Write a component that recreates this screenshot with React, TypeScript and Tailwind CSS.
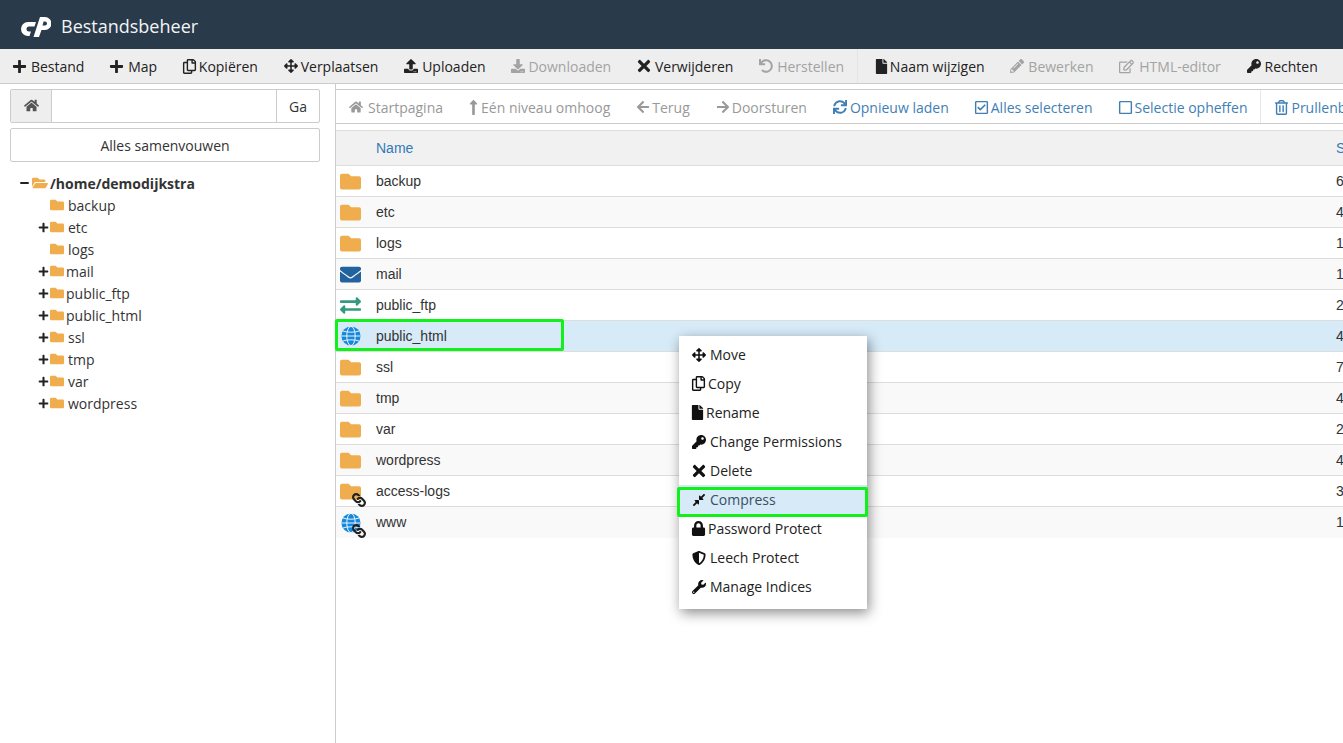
import React from "react";
import {
  FaPlus, FaMinus, FaRegCopy, FaArrowsAlt, FaUpload, FaDownload, FaTimes, FaUndo, FaFile, FaPencilAlt, FaRegEdit, FaKey,
  FaHome, FaLongArrowAltUp, FaArrowLeft, FaArrowRight, FaSync, FaRegCheckSquare, FaRegSquare, FaRegTrashAlt,
  FaFolder, FaFolderOpen, FaEnvelope, FaExchangeAlt, FaLink, FaCompressAlt, FaLock, FaShieldAlt, FaWrench,
} from "react-icons/fa";

const sans = "font-['Open_Sans',sans-serif]";

type IconT = React.ComponentType<{ className?: string }>;
type Tool = { Icon: IconT; label: string; iconBox: string; size: string; disabled?: boolean };

const tools: Tool[] = [
  { Icon: FaPlus, label: "Bestand", iconBox: "w-[18px]", size: "text-[15px] -ml-[1px]" },
  { Icon: FaPlus, label: "Map", iconBox: "w-[18px]", size: "text-[15px] -ml-[1px]" },
  { Icon: FaRegCopy, label: "Kopiëren", iconBox: "w-[16px]", size: "text-[15px] -ml-[1px]" },
  { Icon: FaArrowsAlt, label: "Verplaatsen", iconBox: "w-[17px]", size: "text-[14px]" },
  { Icon: FaUpload, label: "Uploaden", iconBox: "w-[18px]", size: "text-[14px]" },
  { Icon: FaDownload, label: "Downloaden", iconBox: "w-[17px]", size: "text-[14px]", disabled: true },
  { Icon: FaTimes, label: "Verwijderen", iconBox: "w-[18px]", size: "text-[18px] -ml-[2px]" },
  { Icon: FaUndo, label: "Herstellen", iconBox: "w-[18px]", size: "text-[14px]", disabled: true },
];
const tools2: Tool[] = [
  { Icon: FaFile, label: "Naam wijzigen", iconBox: "w-[14px]", size: "text-[15px] -ml-[2px]" },
  { Icon: FaPencilAlt, label: "Bewerken", iconBox: "w-[18px]", size: "text-[14px]", disabled: true },
  { Icon: FaRegEdit, label: "HTML-editor", iconBox: "w-[20px]", size: "text-[15px]", disabled: true },
  { Icon: FaKey, label: "Rechten", iconBox: "w-[18px]", size: "text-[14px]" },
];

function ToolItem({ t }: { t: Tool }) {
  return (
    <div className={`flex items-center px-[12.875px] whitespace-nowrap ${t.disabled ? "text-[#a3a3a3]" : "text-[#222222]"}`}>
      <span className={`flex items-center shrink-0 ${t.iconBox}`}>
        <t.Icon className={`shrink-0 ${t.size}`} />
      </span>
      {t.label}
    </div>
  );
}

type Nav = { Icon: IconT; label: string; iconBox: string; size: string; active?: boolean };
const navs: Nav[] = [
  { Icon: FaHome, label: "Startpagina", iconBox: "w-[19px]", size: "text-[14px]" },
  { Icon: FaLongArrowAltUp, label: "Eén niveau omhoog", iconBox: "w-[12px]", size: "text-[17px] -ml-[4px]" },
  { Icon: FaArrowLeft, label: "Terug", iconBox: "w-[16px]", size: "text-[14px]" },
  { Icon: FaArrowRight, label: "Doorsturen", iconBox: "w-[16px]", size: "text-[14px]" },
  { Icon: FaSync, label: "Opnieuw laden", iconBox: "w-[17px]", size: "text-[14px]", active: true },
  { Icon: FaRegCheckSquare, label: "Alles selecteren", iconBox: "w-[16px]", size: "text-[15px] -ml-[1px]", active: true },
  { Icon: FaRegSquare, label: "Selectie opheffen", iconBox: "w-[16px]", size: "text-[15px] -ml-[1px]", active: true },
];

function NavItem({ n }: { n: Nav }) {
  return (
    <div className={`flex items-center px-[13px] pt-[1px] whitespace-nowrap ${n.active ? "text-[#3f7fb5]" : "text-[#999999]"}`}>
      <span className={`flex items-center shrink-0 ${n.iconBox}`}>
        <n.Icon className={`shrink-0 ${n.size}`} />
      </span>
      {n.label}
    </div>
  );
}

const tree = [
  { name: "backup", plus: false, text: "ml-[4px]" },
  { name: "etc", plus: true, text: "ml-[4px]" },
  { name: "logs", plus: false, text: "ml-[4px]" },
  { name: "mail", plus: true, text: "ml-[2px]" },
  { name: "public_ftp", plus: true, text: "ml-[2px]" },
  { name: "public_html", plus: true, text: "ml-[2px]" },
  { name: "ssl", plus: true, text: "ml-[4px]" },
  { name: "tmp", plus: true, text: "ml-[4px]" },
  { name: "var", plus: true, text: "ml-[4px]" },
  { name: "wordpress", plus: true, text: "ml-[4px]" },
];

type Kind = "folder" | "mail" | "ftp" | "html" | "folderlink" | "htmllink";
const rows: { name: string; size: string; kind: Kind }[] = [
  { name: "backup", size: "6", kind: "folder" },
  { name: "etc", size: "4", kind: "folder" },
  { name: "logs", size: "1", kind: "folder" },
  { name: "mail", size: "1", kind: "mail" },
  { name: "public_ftp", size: "2", kind: "ftp" },
  { name: "public_html", size: "4", kind: "html" },
  { name: "ssl", size: "7", kind: "folder" },
  { name: "tmp", size: "4", kind: "folder" },
  { name: "var", size: "2", kind: "folder" },
  { name: "wordpress", size: "4", kind: "folder" },
  { name: "access-logs", size: "3", kind: "folderlink" },
  { name: "www", size: "1", kind: "htmllink" },
];

function Globe() {
  return (
    <svg width="20" height="20" viewBox="0 0 20 20" fill="none">
      <circle cx="10" cy="10" r="9.6" fill="#1688dc" />
      <g stroke="#ffffff" strokeWidth="0.9">
        <ellipse cx="10" cy="10" rx="4.2" ry="9.6" />
        <path d="M.4 10H19.6" />
        <path d="M2 5C6 6.6 14 6.6 18 5" />
        <path d="M2 15C6 13.4 14 13.4 18 15" />
      </g>
    </svg>
  );
}

function RowIcon({ kind }: { kind: Kind }) {
  const link = kind === "folderlink" || kind === "htmllink";
  return (
    <span className="relative flex items-center justify-center w-[21px] h-[21px] text-[21px]">
      {(kind === "folder" || kind === "folderlink") && <FaFolder className="text-[#f0ad4e]" />}
      {kind === "mail" && <FaEnvelope className="text-[#22639f]" />}
      {kind === "ftp" && <FaExchangeAlt className="text-[#33997f]" />}
      {(kind === "html" || kind === "htmllink") && <Globe />}
      {link && <FaLink className="absolute right-[-5px] bottom-[-5px] text-[14px] text-[#222222] rotate-90" />}
    </span>
  );
}

const menu: { Icon: IconT; label: string; w: string; size: string; hi?: boolean }[] = [
  { Icon: FaArrowsAlt, label: "Move", w: "w-[18px]", size: "text-[14px]" },
  { Icon: FaRegCopy, label: "Copy", w: "w-[16px]", size: "text-[15px] -ml-[1px]" },
  { Icon: FaFile, label: "Rename", w: "w-[14px]", size: "text-[15px] -ml-[2px]" },
  { Icon: FaKey, label: "Change Permissions", w: "w-[18px]", size: "text-[14px]" },
  { Icon: FaTimes, label: "Delete", w: "w-[18px]", size: "text-[18px] -ml-[2px]" },
  { Icon: FaCompressAlt, label: "Compress", w: "w-[18px]", size: "text-[14px]", hi: true },
  { Icon: FaLock, label: "Password Protect", w: "w-[16px]", size: "text-[15px] -ml-[1px]" },
  { Icon: FaShieldAlt, label: "Leech Protect", w: "w-[18px]", size: "text-[14px]" },
  { Icon: FaWrench, label: "Manage Indices", w: "w-[18px]", size: "text-[14px]" },
];

export default function App() {
  return (
    <div className={`relative w-[1343px] h-[743px] overflow-hidden bg-white text-[14px] text-[#333333] ${sans}`}>
      {/* Header */}
      <header className="h-[49px] bg-[#293a4a] flex items-center pl-[21px] pt-[4px]">
        <svg width="30" height="20" viewBox="0 0 30 20" className="shrink-0" fill="#ffffff">
          <path d="M7 5H15L13.5 9.5H8a2.5 2.5 0 0 0 0 5H10L8.5 19H7a7 7 0 0 1 0-14Z" />
          <path
            fillRule="evenodd"
            d="M19 0H24a6.5 6.5 0 0 1 0 13H20.5L18 20H12.5ZM22.6 4.5L21.5 8.5H24a2 2 0 0 0 0-4Z"
          />
        </svg>
        <span className="ml-[10px] text-[18px] text-[#f2f4f6]">Bestandsbeheer</span>
      </header>

      {/* Toolbar */}
      <div className="h-[35px] bg-[#eeeeee] border-b border-[#cccccc] flex items-center">
        {tools.map((t) => (
          <ToolItem key={t.label} t={t} />
        ))}
        <div className="w-px self-stretch bg-[#e4e4e4]" />
        <div className="w-[5px]" />
        {tools2.map((t) => (
          <ToolItem key={t.label} t={t} />
        ))}
      </div>

      {/* Body */}
      <div className="flex h-[659px]">
        <aside className="w-[336px] shrink-0 border-r border-[#cccccc] pl-[10px] pr-[15px] pt-[5px]">
          <div className="flex h-[34px] border border-[#cccccc] rounded-[2px]">
            <div className="w-[41px] bg-[#eeeeee] border-r border-[#cccccc] flex items-center justify-center text-[#555555]">
              <FaHome className="text-[15px] mb-[2px]" />
            </div>
            <div className="flex-1 bg-white" />
            <div className="w-[43px] border-l border-[#cccccc] flex items-center justify-center">Ga</div>
          </div>
          <div className="mt-[5px] h-[34px] border border-[#cccccc] rounded-[2px] flex items-center justify-center">
            Alles samenvouwen
          </div>
          <div className="mt-[10px] text-[14px]">
            <div className="h-[22px] flex items-center pl-[10px]">
              <FaMinus className="text-[10px] text-[#222222] w-[9px]" />
              <FaFolderOpen className="text-[16px] text-[#f0ad4e] ml-[3px]" />
              <span className="font-bold ml-[2px]">/home/demodijkstra</span>
            </div>
            {tree.map((n) => (
              <div key={n.name} className="h-[22px] flex items-center pl-[28px]">
                <span className="w-[12px] flex items-center">
                  {n.plus && <FaPlus className="text-[11px] text-[#222222]" />}
                </span>
                <FaFolder className="text-[14px] text-[#f0ad4e]" />
                <span className={n.text}>{n.name}</span>
              </div>
            ))}
          </div>
        </aside>

        <main className="flex-1 min-w-0 pt-[5px]">
          <div className="h-[35px] border-y border-[#cccccc] flex items-center w-[1100px]">
            {navs.map((n) => (
              <NavItem key={n.label} n={n} />
            ))}
            <div className="w-px self-stretch bg-[#e8e8e8]" />
            <div className="flex items-center pl-[14px] pt-[1px] text-[#3f7fb5] whitespace-nowrap">
              <span className="w-[16px] flex items-center">
                <FaRegTrashAlt className="text-[15px] -ml-[1px] shrink-0" />
              </span>
              Prullenbak
            </div>
          </div>

          <div className="mt-[6px] font-['Liberation_Sans',sans-serif]">
            <div className="h-[36px] bg-[#f1f1f1] border-y border-[#dddddd] flex items-center text-[#337ab7]">
              <span className="w-[40px]" />
              <span className="flex-1">Name</span>
              <span className="w-[7px] overflow-hidden">S</span>
            </div>
            {rows.map((r, i) => {
              const hi = r.name === "public_html";
              return (
                <div
                  key={r.name}
                  className={`h-[31px] border-b border-[#dddddd] last:border-b-0 flex items-center ${
                    hi ? "bg-[#d6eaf8]" : i % 2 === 1 ? "bg-[#f9f9f9]" : "bg-white"
                  }`}
                >
                  <span className="w-[40px] pl-[4px] flex items-center">
                    <RowIcon kind={r.kind} />
                  </span>
                  <span className="flex-1">{r.name}</span>
                  <span className="w-[7px] overflow-hidden">{r.size}</span>
                </div>
              );
            })}
          </div>
        </main>
      </div>

      {/* Highlight around the row */}
      <div className="absolute left-[335px] top-[319px] w-[229px] h-[32px] border-[3px] border-[#12f01c] rounded-[2px]" />

      {/* Context menu */}
      <div className="absolute left-[679px] top-[336px] w-[188px] h-[273px] bg-white pt-[4px] shadow-[2px_4px_12px_rgba(0,0,0,0.45)] text-[#222222]">
        {menu.map((m) => (
          <div key={m.label} className={`h-[29px] flex items-center pl-[13px] ${m.hi ? "bg-[#d6eaf8] text-[#37505f]" : ""}`}>
            <span className={`flex items-center shrink-0 ${m.w}`}>
              <m.Icon className={`shrink-0 ${m.size} text-[#111111]`} />
            </span>
            {m.label}
          </div>
        ))}
      </div>
      <div className="absolute left-[677px] top-[487px] w-[191px] h-[30px] border-[3px] border-[#12f01c] rounded-[2px]" />
    </div>
  );
}
